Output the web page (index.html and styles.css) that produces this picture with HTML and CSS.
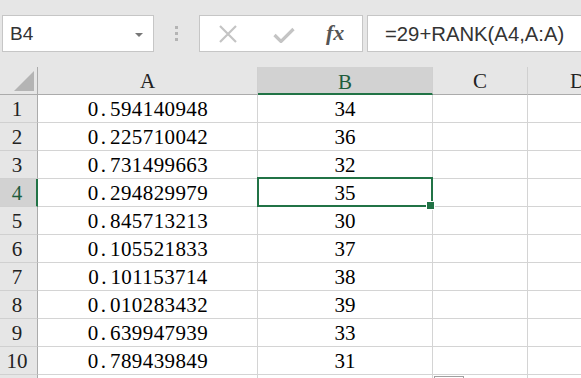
FILE: index.html
```html
<!DOCTYPE html>
<html>
<head>
<meta charset="utf-8">
<link rel="stylesheet" href="styles.css">
</head>
<body>
<div class="toolbar">
  <div class="namebox"><span class="name">B4</span><span class="caret"></span></div>
  <div class="grip"><i></i><i></i><i></i></div>
  <div class="fnbox">
    <svg class="ico" width="20" height="18" viewBox="0 0 20 18"><path d="M2 1 L18 17 M18 1 L2 17" stroke="#c4c4c4" stroke-width="2.2" fill="none"/></svg>
    <svg class="ico" width="22" height="16" viewBox="0 0 22 16"><path d="M1.5 8 L8 14.5 L20.5 2" stroke="#c4c4c4" stroke-width="3.2" fill="none"/></svg>
    <span class="fx">fx</span>
  </div>
  <div class="formula">=29+RANK(A4,A:A)</div>
</div>
<div class="sheet">
  <div class="corner"><span class="tri"></span></div>
  <div class="ch">A</div>
  <div class="ch sel">B</div>
  <div class="ch">C</div>
  <div class="ch last">D</div>

  <div class="rh">1</div><div class="c num">0<span class="dot">.</span>594140948</div><div class="c">34</div><div class="c"></div><div class="c last"></div>
  <div class="rh">2</div><div class="c num">0<span class="dot">.</span>225710042</div><div class="c">36</div><div class="c"></div><div class="c last"></div>
  <div class="rh">3</div><div class="c num">0<span class="dot">.</span>731499663</div><div class="c">32</div><div class="c"></div><div class="c last"></div>
  <div class="rh sel">4</div><div class="c num">0<span class="dot">.</span>294829979</div><div class="c active">35</div><div class="c"></div><div class="c last"></div>
  <div class="rh">5</div><div class="c num">0<span class="dot">.</span>845713213</div><div class="c">30</div><div class="c"></div><div class="c last"></div>
  <div class="rh">6</div><div class="c num">0<span class="dot">.</span>105521833</div><div class="c">37</div><div class="c"></div><div class="c last"></div>
  <div class="rh">7</div><div class="c num">0<span class="dot">.</span>101153714</div><div class="c">38</div><div class="c"></div><div class="c last"></div>
  <div class="rh">8</div><div class="c num">0<span class="dot">.</span>010283432</div><div class="c">39</div><div class="c"></div><div class="c last"></div>
  <div class="rh">9</div><div class="c num">0<span class="dot">.</span>639947939</div><div class="c">33</div><div class="c"></div><div class="c last"></div>
  <div class="rh">10</div><div class="c num">0<span class="dot">.</span>789439849</div><div class="c">31</div><div class="c"></div><div class="c last"></div>

  <div class="rh"></div><div class="c"></div><div class="c"></div><div class="c"><span class="tab"></span></div><div class="c last"></div>
</div>
</body>
</html>
```

FILE: styles.css
```css
* { box-sizing: border-box; }
html, body { margin: 0; padding: 0; }
body {
  width: 581px;
  height: 378px;
  overflow: hidden;
  background: #ffffff;
  font-family: "Liberation Serif", serif;
}

.toolbar {
  height: 67px;
  background: #e6e6e6;
  display: flex;
  align-items: flex-start;
  padding: 15px 0 0 2px;
}
.namebox {
  width: 152px;
  height: 37px;
  background: #fff;
  border: 1px solid #c6c6c6;
  display: flex;
  align-items: center;
  justify-content: space-between;
  padding: 0 10px 0 7px;
}
.name {
  font-family: "Liberation Sans", sans-serif;
  font-size: 19px;
  color: #333;
  padding-top: 1px;
}
.caret {
  width: 0; height: 0;
  border-left: 4px solid transparent;
  border-right: 4px solid transparent;
  border-top: 4px solid #777;
  margin-top: 2px;
}
.grip {
  width: 45px;
  height: 37px;
  display: flex;
  flex-direction: column;
  align-items: center;
  justify-content: center;
  gap: 3px;
}
.grip i {
  display: block;
  width: 3px;
  height: 3px;
  background: #b4b4b4;
}
.fnbox {
  width: 164px;
  height: 37px;
  background: #fff;
  border: 1px solid #c6c6c6;
  display: flex;
  align-items: center;
  padding: 0 0 0 18px;
}
.fnbox .ico:first-child { margin-right: 35px; }
.fnbox .ico:nth-child(2) { margin-right: 31px; margin-top: 2px; }
.fx {
  font-family: "Liberation Serif", serif;
  font-style: italic;
  font-weight: bold;
  font-size: 22px;
  color: #555;
  margin-top: -2px;
}
.formula {
  margin-left: 4px;
  flex: 1;
  height: 37px;
  background: #fff;
  border: 1px solid #c6c6c6;
  border-right: none;
  font-family: "Liberation Sans", sans-serif;
  font-size: 20.3px;
  color: #333;
  display: flex;
  align-items: center;
  padding: 1px 0 0 17px;
}

.sheet {
  display: grid;
  grid-template-columns: 38px 220px 175px 95px 1fr;
  grid-auto-rows: 28px;
  background: #fff;
}
.corner, .ch, .rh {
  background: #e6e6e6;
  font-size: 21px;
  color: #222;
  display: flex;
  align-items: center;
  justify-content: center;
}
.corner {
  border-right: 1px solid #ababab;
  border-bottom: 1px solid #ababab;
  align-items: flex-end;
  justify-content: flex-end;
  padding: 0 3px 3px 0;
}
.tri {
  width: 0; height: 0;
  border-left: 20px solid transparent;
  border-bottom: 20px solid #b4b4b4;
}
.ch {
  border-right: 1px solid #d0d0d0;
  border-bottom: 1px solid #ababab;
  padding-top: 2px;
}
.ch.sel {
  background: #d2d2d2;
  color: #1e5c3c;
  border-bottom: 2px solid #217346;
  padding-top: 4px;
}
.ch.last { justify-content: flex-start; padding-left: 42px; border-right: none; }
.rh {
  border-right: 1px solid #ababab;
  border-bottom: 1px solid #d0d0d0;
  padding: 2px 3px 0 0;
}
.rh.sel {
  background: #d2d2d2;
  color: #1e5c3c;
  border-right: 2px solid #217346;
  padding-right: 2px;
}
.c {
  border-right: 1px solid #d4d4d4;
  border-bottom: 1px solid #d4d4d4;
  font-size: 21px;
  color: #000;
  display: flex;
  align-items: center;
  justify-content: center;
  padding-top: 2px;
}
.c.last { border-right: none; }
.num { letter-spacing: 0.4px; padding-left: 1px; }
.dot {
  display: inline-block;
  width: 11.3px;
  text-align: left;
  padding-left: 2px;
}
.active { position: relative; }
.active::after {
  content: "";
  position: absolute;
  left: -1px;
  top: -2px;
  right: -1px;
  bottom: -1px;
  border: 2px solid #217346;
}
.active::before {
  content: "";
  position: absolute;
  right: -3px;
  bottom: -4px;
  width: 7px;
  height: 7px;
  background: #217346;
  border: 1px solid #fff;
  z-index: 2;
}
.c .tab {
  display: block;
  width: 30px;
  height: 6px;
  border: 1px solid #a0a0a0;
  border-bottom: none;
  align-self: flex-start;
  margin: 1px 0 0 1px;
}
.c:has(.tab) { justify-content: flex-start; padding-top: 0; align-items: flex-start; }
```
